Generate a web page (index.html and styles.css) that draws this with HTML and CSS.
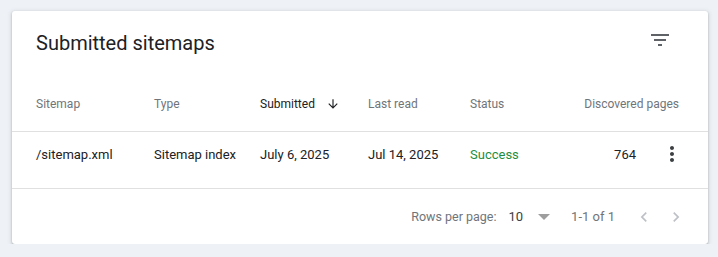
FILE: index.html
```html
<!DOCTYPE html>
<html lang="en">
<head>
<meta charset="utf-8">
<title>Submitted sitemaps</title>
<link rel="stylesheet" href="styles.css">
</head>
<body>
<div class="card">
  <div class="titlebar">
    <h1 class="title">Submitted sitemaps</h1>
    <button class="icon-btn filter" aria-label="Filter">
      <svg width="24" height="24" viewBox="0 0 24 24"><path d="M10 18h4v-2h-4v2zM3 6v2h18V6H3zm3 7h12v-2H6v2z" fill="#5f6368"/></svg>
    </button>
  </div>
  <div class="grid head">
    <div class="cell">Sitemap</div>
    <div class="cell">Type</div>
    <div class="cell sorted">Submitted<svg class="sort" width="14" height="14" viewBox="0 0 24 24"><path d="M20 12l-1.41-1.41L13 16.17V4h-2v12.17l-5.58-5.59L4 12l8 8 8-8z" fill="#202124"/></svg></div>
    <div class="cell">Last read</div>
    <div class="cell">Status</div>
    <div class="cell pages-head">Discovered pages</div>
  </div>
  <div class="grid row">
    <div class="cell">/sitemap.xml</div>
    <div class="cell">Sitemap index</div>
    <div class="cell">July 6, 2025</div>
    <div class="cell">Jul 14, 2025</div>
    <div class="cell success">Success</div>
    <div class="cell num">764</div>
    <div class="cell action">
      <svg width="24" height="24" viewBox="0 0 24 24"><path d="M12 8c1.1 0 2-.9 2-2s-.9-2-2-2-2 .9-2 2 .9 2 2 2zm0 2c-1.1 0-2 .9-2 2s.9 2 2 2 2-.9 2-2-.9-2-2-2zm0 6c-1.1 0-2 .9-2 2s.9 2 2 2 2-.9 2-2-.9-2-2-2z" fill="#3c4043"/></svg>
    </div>
  </div>
  <div class="footer">
    <span class="rpp">Rows per page:</span>
    <span class="rpp-val">10</span>
    <span class="caret"></span>
    <span class="range">1-1 of 1</span>
    <button class="icon-btn page" aria-label="Previous page">
      <svg width="20" height="20" viewBox="0 0 24 24"><path d="M15.41 7.41L14 6l-6 6 6 6 1.41-1.41L10.83 12z" fill="#bdc1c6"/></svg>
    </button>
    <button class="icon-btn page" aria-label="Next page">
      <svg width="20" height="20" viewBox="0 0 24 24"><path d="M8.59 16.59L10 18l6-6-6-6-1.41 1.41L13.17 12z" fill="#bdc1c6"/></svg>
    </button>
  </div>
</div>
</body>
</html>
```

FILE: styles.css
```css
* { box-sizing: border-box; }
html, body { margin: 0; padding: 0; }
body {
  background: #eef1f6;
  font-family: Roboto, "Liberation Sans", Arial, sans-serif;
  color: #202124;
  padding: 11px 10px 0 12px;
}
.card {
  width: 696px;
  height: 233px;
  background: #fff;
  border-radius: 3px;
  box-shadow: 0 1px 2px rgba(60,64,67,.35), 0 1px 4px 1px rgba(60,64,67,.12);
  overflow: hidden;
}
.titlebar {
  height: 64px;
  display: flex;
  justify-content: space-between;
  align-items: flex-start;
  padding: 18px 36px 0 24px;
}
.title {
  margin: 0;
  font-size: 20px;
  line-height: 28px;
  font-weight: 400;
  color: #202124;
}
.icon-btn {
  border: 0;
  background: none;
  padding: 0;
  margin: 0;
  display: flex;
  align-items: center;
  justify-content: center;
  cursor: pointer;
}
.filter { width: 24px; height: 24px; margin-top: -1px; }
.grid {
  display: grid;
  grid-template-columns: 118px 106px 108px 102px 1fr 96px 72px;
  padding-left: 24px;
  border-bottom: 1px solid #e0e0e0;
}
.head {
  height: 57px;
  align-items: center;
  font-size: 12px;
  line-height: 16px;
  color: #70757a;
  padding-top: 1px;
}
.cell { white-space: nowrap; }
.sorted {
  color: #202124;
  display: flex;
  align-items: center;
}
.sort { margin-left: 11px; }
.pages-head {
  grid-column: 6 / span 2;
  text-align: right;
  padding-right: 29px;
}
.row {
  height: 57px;
  align-items: start;
  padding-top: 13px;
  font-size: 13px;
  line-height: 20px;
  color: #202124;
}
.success { color: #1e8e3e; }
.num { text-align: right; }
.action {
  display: flex;
  justify-content: center;
  margin-top: -3px;
}
.footer {
  height: 56px;
  display: flex;
  align-items: center;
  justify-content: flex-end;
  padding-right: 16px;
  font-size: 12.5px;
  line-height: 20px;
  color: #70757a;
}
.rpp-val {
  margin-left: 12px;
  color: #3c4043;
  font-size: 13px;
}
.caret {
  width: 0;
  height: 0;
  border-left: 6px solid transparent;
  border-right: 6px solid transparent;
  border-top: 6px solid #9e9e9e;
  margin-left: 15px;
}
.range { margin-left: 21px; margin-right: 13px; font-size: 13px; }
.page { width: 32px; height: 32px; }
```
